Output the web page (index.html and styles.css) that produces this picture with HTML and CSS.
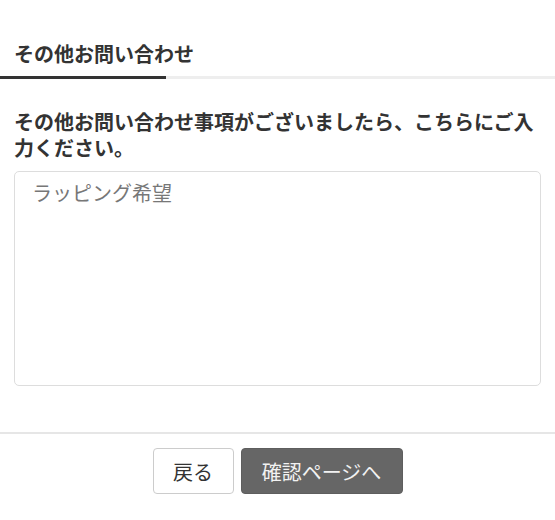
FILE: index.html
```
<!DOCTYPE html>
<html lang="ja">
<head>
    <meta charset="UTF-8">
    <meta name="viewport" content="width=device-width, initial-scale=1.0">
    <title>その他お問い合わせ</title>
    <link rel="stylesheet" href="styles.css">
</head>
<body>
    <div class="tabs">
        <div class="tab active">その他お問い合わせ</div>
    </div>

    <div class="content">
        <p class="label">その他お問い合わせ事項がございましたら、こちらにご入力ください。</p>
        <textarea class="memo" placeholder="ラッピング希望"></textarea>
    </div>

    <div class="actions">
        <button class="btn btn-back">戻る</button>
        <button class="btn btn-next">確認ページへ</button>
    </div>
</body>
</html>
```

FILE: styles.css
```
body {
    margin: 0;
    background-color: #fff;
    color: #333;
    font-family: "Noto Sans CJK JP", "Noto Sans", sans-serif;
}
.tabs {
    display: flex;
    border-bottom: 3px solid #eee;
}
.tab {
    width: 152px;
    padding: 40px 0 8px 14px;
    margin-bottom: -3px;
    font-size: 20px;
    line-height: 28px;
    font-weight: bold;
    white-space: nowrap;
}
.tab.active {
    border-bottom: 3px solid #333;
}
.content {
    padding: 0 14px;
}
.label {
    margin: 30px 0 10px;
    font-size: 20px;
    line-height: 26px;
    font-weight: bold;
}
.memo {
    display: block;
    box-sizing: border-box;
    width: 100%;
    height: 215px;
    margin: 0;
    padding: 6px 17px;
    border: 1px solid #ddd;
    border-radius: 5px;
    font-family: inherit;
    font-size: 20px;
    line-height: 30px;
    color: #333;
    resize: none;
}
.memo::placeholder {
    color: #777;
}
.actions {
    display: flex;
    justify-content: center;
    gap: 7px;
    margin-top: 46px;
    padding-top: 14px;
    border-top: 2px solid #e6e6e6;
}
.btn {
    height: 46px;
    border-radius: 4px;
    font-family: inherit;
    font-size: 20px;
    cursor: pointer;
}
.btn-back {
    width: 81px;
    background-color: #fff;
    border: 1px solid #ccc;
    color: #333;
}
.btn-next {
    width: 162px;
    background-color: #666;
    border: 1px solid #5e5e5e;
    color: #f2f2f2;
}
```
